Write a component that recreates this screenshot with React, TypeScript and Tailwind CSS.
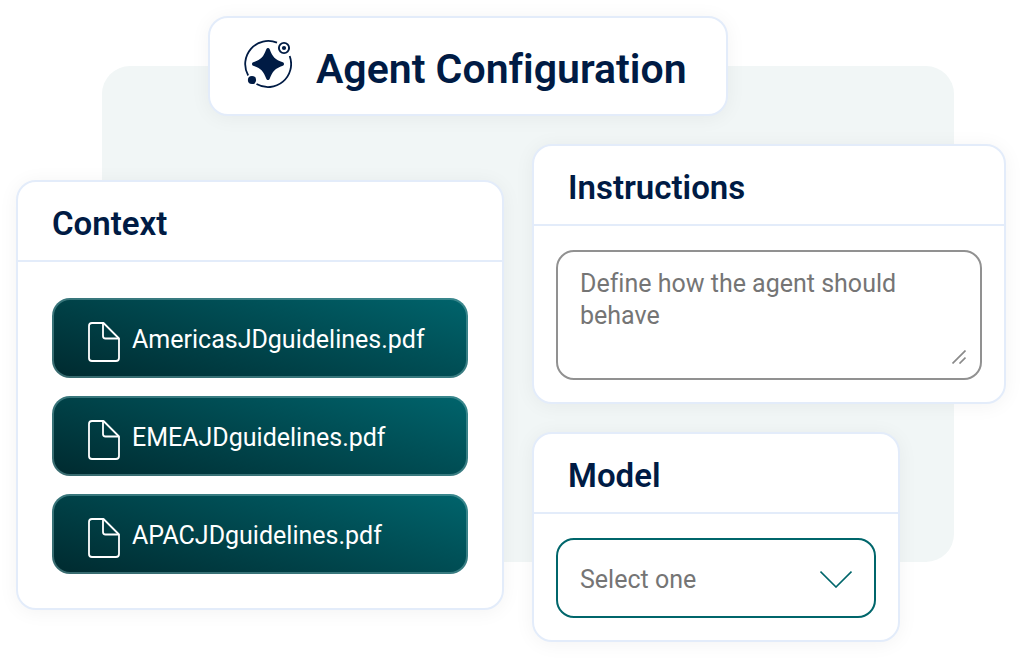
import type { ReactNode } from "react";
import { clsx } from "clsx";

const FILES = [
  "AmericasJDguidelines.pdf",
  "EMEAJDguidelines.pdf",
  "APACJDguidelines.pdf",
];

const CARD =
  "rounded-[20px] border-2 border-[#e3ecfa] bg-white shadow-[0_2px_20px_rgba(0,0,0,0.05)]";

function AgentIcon() {
  return (
    <svg width="48" height="48" viewBox="0 0 48 48" fill="none" className="shrink-0 text-[#001b44]" aria-hidden="true">
      <path
        d="M4.2 35.5A23.1 23.1 0 0 1 33 2.7M45.7 16A23.1 23.1 0 0 1 12.5 44"
        stroke="currentColor"
        strokeWidth="1.8"
      />
      <path
        d="M22.3 9.2C22.9 7.7 25.1 7.7 25.7 9.2C28.6 17 31 19.4 38.8 22.3C40.4 22.9 40.4 25.1 38.8 25.7C31 28.6 28.6 31 25.7 38.8C25.1 40.4 22.9 40.4 22.3 38.8C19.4 31 17 28.6 9.2 25.7C7.6 25.1 7.6 22.9 9.2 22.3C17 19.4 19.4 17 22.3 9.2Z"
        fill="currentColor"
      />
      <circle cx="40" cy="8" r="5.1" stroke="currentColor" strokeWidth="1.9" />
      <circle cx="40" cy="8" r="2.1" fill="currentColor" />
      <circle cx="8" cy="40" r="4.1" fill="currentColor" />
    </svg>
  );
}

function FileIcon() {
  return (
    <svg
      width="32"
      height="40"
      viewBox="0 0 32 40"
      fill="none"
      stroke="currentColor"
      strokeWidth="1.8"
      strokeLinejoin="round"
      className="mt-1 shrink-0"
      aria-hidden="true"
    >
      <path d="M15.5 1H4A3 3 0 0 0 1 4V36A3 3 0 0 0 4 39H28A3 3 0 0 0 31 36V16.5L15.5 1Z" />
      <path d="M15 1V14A2.5 2.5 0 0 0 17.5 16.5H31" />
    </svg>
  );
}

interface PanelProps {
  title: ReactNode;
  className?: string;
  bodyClassName: string;
  children: ReactNode;
}

function Panel({ title, className, bodyClassName, children }: PanelProps) {
  return (
    <section className={clsx(CARD, className)}>
      <h2 className="border-b-2 border-[#e3ecfa] px-[34px] pt-[22px] pb-4 text-[33px] leading-10 font-semibold">
        {title}
      </h2>
      <div className={bodyClassName}>{children}</div>
    </section>
  );
}

export default function App() {
  return (
    <main className="relative isolate bg-white p-4 font-[Roboto,sans-serif] text-[#001b44] [font-variant-ligatures:none]">
      {/* Backdrop */}
      <div className="absolute top-[66px] right-[68px] bottom-24 left-[10%] -z-10 rounded-[28px] bg-[#f1f6f6]" />

      <header className={clsx(CARD, "ml-48 flex w-fit min-w-[520px] items-start gap-6 px-[34px] pt-[22px] pb-4")}>
        <AgentIcon />
        <h1 className="text-[41px] leading-[58px] font-semibold">Agent Configuration</h1>
      </header>

      <div className="mt-7 grid grid-cols-[488fr_474fr] items-start gap-7">
        <Panel title="Context" className="mt-9" bodyClassName="px-[34px] pt-9 pb-[34px]">
          <ul className="flex flex-col gap-[18px]">
            {FILES.map((name) => (
              <li
                key={name}
                className="flex h-20 items-center gap-3 rounded-[18px] border-2 border-[#6fa9ad]/50 bg-linear-[16deg] from-[#002a2f] to-[#00646c] bg-origin-border px-[34px] pt-1 text-[25px] text-white"
              >
                <FileIcon />
                {name}
              </li>
            ))}
          </ul>
        </Panel>

        <div className="flex flex-col gap-7">
          <Panel
            title={<label htmlFor="instructions">Instructions</label>}
            bodyClassName="px-[22px] pt-6 pb-[22px]"
          >
            <div className="relative">
              <textarea
                id="instructions"
                placeholder="Define how the agent should behave"
                className="block h-[130px] w-full resize-none rounded-[18px] border-2 border-[#919191] px-[22px] py-4 text-[25px] leading-8 placeholder:text-[#757575]"
              />
              <svg
                width="14"
                height="14"
                viewBox="0 0 14 14"
                stroke="#8a8a8a"
                strokeWidth="1.7"
                className="pointer-events-none absolute right-4 bottom-4"
                aria-hidden="true"
              >
                <path d="M0.5 13.5L13.5 0.5M7.5 13.5L13.5 7.5" />
              </svg>
            </div>
          </Panel>

          <Panel
            title={<label htmlFor="model">Model</label>}
            className="w-[368px]"
            bodyClassName="px-[22px] pt-6 pb-[22px]"
          >
            <div className="relative">
              <select
                id="model"
                className="block h-20 w-full appearance-none rounded-[18px] border-2 border-[#00666b] bg-white px-[22px] pt-1 text-[25px] text-[#757575]"
              >
                <option>Select one</option>
              </select>
              <svg
                width="32"
                height="18"
                viewBox="0 0 32 18"
                fill="none"
                stroke="#00666b"
                strokeWidth="1.6"
                className="pointer-events-none absolute top-8 right-6"
                aria-hidden="true"
              >
                <path d="M0.5 1.5L16 17L31.5 1.5" />
              </svg>
            </div>
          </Panel>
        </div>
      </div>
    </main>
  );
}
